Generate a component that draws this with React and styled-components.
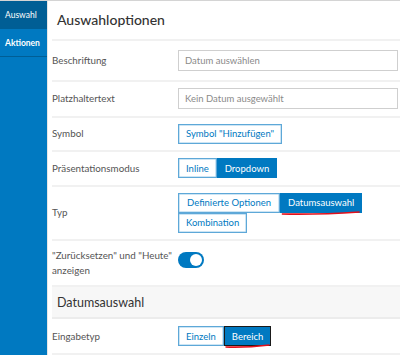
import React from 'react';
import styled, { createGlobalStyle } from 'styled-components';

const Global = createGlobalStyle`
  html, body { margin: 0; padding: 0; background: #fff; }
  body { font-family: "Lato", "Open Sans", sans-serif; color: #4c4c4c; }
`;

const Shell = styled.div`
  display: flex;
  width: 400px;
  height: 355px;
  overflow: hidden;
  border-top: 1px solid #d4d4d4;
  box-sizing: border-box;
`;

const Sidebar = styled.nav`
  width: 47px;
  flex: none;
  background: #0079c1;
  border-right: 1px solid #e6e6e6;
  display: flex;
  flex-direction: column;
`;

const Tab = styled.div`
  height: 27px;
  display: flex;
  align-items: center;
  padding-left: 5px;
  font-size: 8.5px;
  font-weight: ${p => (p.$active ? 400 : 700)};
  color: #fff;
  background: ${p => (p.$active ? '#005e95' : 'transparent')};
  border-bottom: 1px solid #005e95;
`;

const Main = styled.main`
  flex: 1;
  display: flex;
  flex-direction: column;
  padding-left: 4px;
  min-width: 0;
`;

const Title = styled.h1`
  margin: 0;
  height: 38px;
  display: flex;
  align-items: center;
  padding-left: 5px;
  font-size: 14px;
  font-weight: 500;
  color: #333;
  border-bottom: 2px solid #f1f1f1;
`;

const Row = styled.div`
  display: flex;
  align-items: center;
  height: ${p => p.$h}px;
  border-bottom: 2px solid #f1f1f1;
  box-sizing: border-box;
`;

const Label = styled.div`
  width: 126px;
  flex: none;
  font-size: 9.8px;
  line-height: 15px;
  color: #555;
`;

const Control = styled.div`
  flex: 1;
  display: flex;
  flex-wrap: wrap;
  align-content: center;
  max-width: ${p => p.$max || 'none'};
`;

const Input = styled.div`
  flex: 1;
  height: 21px;
  margin-right: 2px;
  border: 1px solid #cfcfcf;
  box-sizing: border-box;
  display: flex;
  align-items: center;
  padding-left: 6px;
  font-size: 9.5px;
  color: #8a8a8a;
`;

const Btn = styled.div`
  position: relative;
  height: 20px;
  box-sizing: border-box;
  display: flex;
  align-items: center;
  padding: 0 ${p => p.$px || 7}px;
  font-size: 9.5px;
  color: ${p => (p.$on ? '#fff' : '#0079c1')};
  background: ${p => (p.$on ? '#0079c1' : '#fff')};
  border: 1px solid ${p => (p.$focus ? '#1a1a1a' : p.$on ? '#0079c1' : '#5ea8d8')};
  box-shadow: ${p => (p.$on ? 'none' : 'inset 0 0 0 0.5px #9ccbe9')};
`;

const Scribble = styled.svg`
  position: absolute;
  left: 0;
  bottom: -3px;
  width: 100%;
  height: 5px;
  overflow: visible;
`;

const Underline = () => (
  <Scribble viewBox="0 0 100 5" preserveAspectRatio="none">
    <path d="M1 4 C30 4.5 70 3.5 98 2" stroke="#e3101b" strokeWidth="1.6" fill="none" />
  </Scribble>
);

const Toggle = styled.div`
  width: 26px;
  height: 16px;
  border-radius: 8px;
  background: #0079c1;
  position: relative;
  margin-top: -6px;
  &::after {
    content: '';
    position: absolute;
    right: 2px;
    top: 2px;
    width: 12px;
    height: 12px;
    border-radius: 50%;
    background: #fff;
  }
`;

const Section = styled.div`
  height: 32px;
  display: flex;
  align-items: center;
  padding-left: 5px;
  background: #f7f7f7;
  border-bottom: 2px solid #ececec;
  box-sizing: border-box;
  font-size: 12.5px;
  color: #333;
`;

export default function App() {
  return (
    <>
      <Global />
      <Shell>
        <Sidebar>
          <Tab $active>Auswahl</Tab>
          <Tab>Aktionen</Tab>
        </Sidebar>
        <Main>
          <Title>Auswahloptionen</Title>
          <Row $h={41}>
            <Label>Beschriftung</Label>
            <Input>Datum auswählen</Input>
          </Row>
          <Row $h={36}>
            <Label>Platzhaltertext</Label>
            <Input>Kein Datum ausgewählt</Input>
          </Row>
          <Row $h={34}>
            <Label>Symbol</Label>
            <Control>
              <Btn>Symbol "Hinzufügen"</Btn>
            </Control>
          </Row>
          <Row $h={35}>
            <Label>Präsentationsmodus</Label>
            <Control>
              <Btn>Inline</Btn>
              <Btn $on>Dropdown</Btn>
            </Control>
          </Row>
          <Row $h={55}>
            <Label>Typ</Label>
            <Control $max="190px">
              <Btn $px={8}>Definierte Optionen</Btn>
              <Btn $on>
                Datumsauswahl
                <Underline />
              </Btn>
              <Btn>Kombination</Btn>
            </Control>
          </Row>
          <Row $h={46}>
            <Label>"Zurücksetzen" und "Heute" anzeigen</Label>
            <Control>
              <Toggle />
            </Control>
          </Row>
          <Section>Datumsauswahl</Section>
          <Row $h={36}>
            <Label>Eingabetyp</Label>
            <Control>
              <Btn>Einzeln</Btn>
              <Btn $on $focus>
                Bereich
                <Underline />
              </Btn>
            </Control>
          </Row>
        </Main>
      </Shell>
    </>
  );
}
